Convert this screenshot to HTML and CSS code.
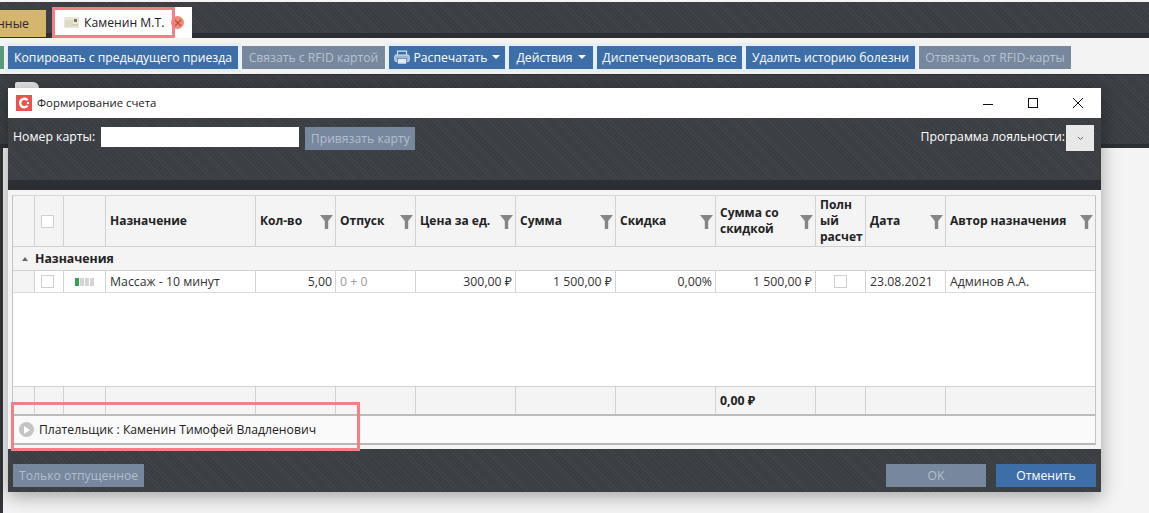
FILE: index.html
```html
<!DOCTYPE html>
<html lang="ru">
<head>
<meta charset="utf-8">
<title>Формирование счета</title>
<link rel="stylesheet" href="styles.css">
</head>
<body>
<div class="page">
  <header class="tabbar hatch">
    <div class="tab tab-gold">нные</div>
    <div class="tab tab-active">
      <svg class="tab-icon" width="15" height="11" viewBox="0 0 15 11"><rect width="15" height="11" fill="#e9e7d8"/><rect x="1" y="3" width="8" height="7" fill="#dcdac4"/><rect x="10" y="2" width="3" height="3" fill="#77745f"/><rect x="9" y="7" width="5" height="2" fill="#cfcdb6"/></svg>
      <span>Каменин М.Т.</span>
      <span class="tab-close"><svg width="8" height="8" viewBox="0 0 8 8"><path d="M1 1l6 6M7 1L1 7" stroke="#b9503e" stroke-width="1.2"/></svg></span>
    </div>
  </header>
  <nav class="toolbar">
    <span class="tbtn tbtn-green"></span>
    <button class="tbtn w-copy">Копировать с предыдущего приезда</button>
    <button class="tbtn off w-link">Связать с RFID картой</button>
    <button class="tbtn w-print">
      <svg class="print" width="16" height="15" viewBox="0 0 16 15"><path d="M3.5 5V1.2h9V5" fill="none" stroke="#d5dfea" stroke-width="1.2"/><path d="M3 11.5H2A1.2 1.2 0 0 1 .8 10.3V6.2A1.2 1.2 0 0 1 2 5h12a1.2 1.2 0 0 1 1.2 1.2v4.1a1.2 1.2 0 0 1-1.2 1.2h-1" fill="#9fb6d0" stroke="#d5dfea"/><rect x="3.5" y="8.5" width="9" height="5.5" fill="#e4eaf1" stroke="#3d6ea8" stroke-width=".6"/></svg>
      Распечатать<i class="caret"></i></button>
    <button class="tbtn w-act">Действия<i class="caret"></i></button>
    <button class="tbtn w-disp">Диспетчеризовать все</button>
    <button class="tbtn w-del">Удалить историю болезни</button>
    <button class="tbtn off w-unl">Отвязать от RFID-карты</button>
  </nav>
  <div class="band hatch"><span class="doc"></span></div>
  <main class="content"></main>
</div>

<section class="modal">
  <div class="titlebar">
    <svg class="logo" width="16" height="16" viewBox="0 0 16 16"><rect width="16" height="16" fill="#e8534f"/><path d="M11.5 5.2A4.2 4.2 0 1 0 11.5 10.8" fill="none" stroke="#fff" stroke-width="2.4"/><circle cx="12" cy="8" r="1.2" fill="#fff"/></svg>
    <span class="title">Формирование счета</span>
    <div class="winctl">
      <svg width="12" height="12" viewBox="0 0 12 12"><path d="M1 7.5h10" stroke="#111" stroke-width="1"/></svg>
      <svg width="12" height="12" viewBox="0 0 12 12"><rect x="1.5" y="1.5" width="9" height="9" fill="none" stroke="#111"/></svg>
      <svg width="12" height="12" viewBox="0 0 12 12"><path d="M1 1l10 10M11 1L1 11" stroke="#111" stroke-width="1"/></svg>
    </div>
  </div>
  <div class="cardform hatch">
    <label class="lbl">Номер карты:</label>
    <span class="cardinput"></span>
    <button class="bindbtn">Привязать карту</button>
    <span class="spacer"></span>
    <label class="lbl lbl-right">Программа лояльности:</label>
    <span class="combo"><svg width="7" height="5" viewBox="0 0 7 5"><path d="M1 1l2.5 2.5L6 1" fill="none" stroke="#666"/></svg></span>
  </div>
  <div class="strip"></div>
  <div class="panel">
    <div class="grid">
      <div class="row head">
        <div class="c"></div>
        <div class="c mid sel"><span class="chk"></span></div>
        <div class="c"></div>
        <div class="c">Назначение</div>
        <div class="c">Кол-во<svg class="fn" viewBox="0 0 13 14"><path d="M0 0h13L8.2 6v8H4.8V6z"/></svg></div>
        <div class="c">Отпуск<svg class="fn" viewBox="0 0 13 14"><path d="M0 0h13L8.2 6v8H4.8V6z"/></svg></div>
        <div class="c">Цена за ед.<svg class="fn" viewBox="0 0 13 14"><path d="M0 0h13L8.2 6v8H4.8V6z"/></svg></div>
        <div class="c">Сумма<svg class="fn" viewBox="0 0 13 14"><path d="M0 0h13L8.2 6v8H4.8V6z"/></svg></div>
        <div class="c">Скидка<svg class="fn" viewBox="0 0 13 14"><path d="M0 0h13L8.2 6v8H4.8V6z"/></svg></div>
        <div class="c">Сумма со скидкой<svg class="fn" viewBox="0 0 13 14"><path d="M0 0h13L8.2 6v8H4.8V6z"/></svg></div>
        <div class="c">Полн<br>ый<br>расчет</div>
        <div class="c">Дата<svg class="fn" viewBox="0 0 13 14"><path d="M0 0h13L8.2 6v8H4.8V6z"/></svg></div>
        <div class="c">Автор назначения<svg class="fn" viewBox="0 0 13 14"><path d="M0 0h13L8.2 6v8H4.8V6z"/></svg></div>
      </div>
      <div class="group"><i class="tri"></i>Назначения</div>
      <div class="row data">
        <div class="c c-blank"></div>
        <div class="c mid sel"><span class="chk"></span></div>
        <div class="c mid"><span class="meter"><i class="on"></i><i></i><i></i><i></i></span></div>
        <div class="c">Массаж - 10 минут</div>
        <div class="c r">5,00</div>
        <div class="c muted">0 + 0</div>
        <div class="c r">300,00 ₽</div>
        <div class="c r">1 500,00 ₽</div>
        <div class="c r">0,00%</div>
        <div class="c r">1 500,00 ₽</div>
        <div class="c mid"><span class="chk"></span></div>
        <div class="c">23.08.2021</div>
        <div class="c">Админов А.А.</div>
      </div>
      <div class="empty"></div>
      <div class="row total">
        <div class="c"></div><div class="c"></div><div class="c"></div><div class="c"></div><div class="c"></div><div class="c"></div><div class="c"></div><div class="c"></div><div class="c"></div>
        <div class="c">0,00 ₽</div>
        <div class="c"></div><div class="c"></div><div class="c"></div>
      </div>
    </div>
    <div class="payer">
      <span class="play"><svg width="6" height="8" viewBox="0 0 6 8"><path d="M0 0l6 4-6 4z" fill="#fff"/></svg></span>
      <span>Плательщик : Каменин Тимофей Владленович</span>
    </div>
  </div>
  <div class="foot hatch">
    <button class="fbtn off w-only">Только отпущенное</button>
    <span class="spacer"></span>
    <button class="fbtn off w-ok">OK</button>
    <button class="fbtn w-ok">Отменить</button>
  </div>
  <span class="mark mark-payer"></span>
</section>
<span class="mark mark-tab"></span>
</body>
</html>
```
FILE: styles.css
```css
* { box-sizing: border-box; }
html, body { margin: 0; height: 513px; overflow: hidden; }
body { font-family: "Open Sans", "Noto Sans", sans-serif; font-size: 12px; color: #222; background: #f4f4f4; }
button { font: inherit; border: 0; padding: 0 0 1px; margin: 0; }
.hatch { background-color: #3a3d42; background-image: repeating-linear-gradient(45deg, rgba(255,255,255,.035) 0 1px, transparent 1px 3px); }

.page { display: flex; flex-direction: column; height: 513px; padding-top: 2px; }
.tabbar { height: 36px; display: flex; align-items: flex-end; flex: none; border-bottom: 5px solid #2b2e32; }
.tab { display: flex; align-items: center; }
.tab-gold { width: 46px; height: 27px; margin-bottom: -4px; background: #d6b56c; justify-content: flex-end; padding-right: 17px; font-size: 12.3px; color: #2b2b2b; white-space: nowrap; }
.tab-active { width: 140px; height: 31px; margin: 0 0 -5px 6px; padding-left: 12px; background: #fff; font-size: 12.2px; color: #222; }
.tab-icon { margin-right: 5px; }
.tab-close { width: 13px; height: 13px; margin-left: 7px; border-radius: 50%; background: #ef8a78; display: flex; align-items: center; justify-content: center; }

.toolbar { height: 36px; flex: none; display: flex; align-items: flex-start; gap: 4px; padding-top: 8px; background: #f3f3f3; }
.tbtn { height: 23px; background: #3d6ea8; color: #fff; font-size: 12.2px; display: flex; align-items: center; justify-content: center; white-space: nowrap; box-shadow: 0 0 0 3px #e6eef6; }
.tbtn.off { background: #76879e; color: #b9c3d0; box-shadow: none; }
.tbtn-green { width: 4px; background: #5b9a78; box-shadow: none; }
.w-copy { width: 230px; }
.w-link { width: 143px; }
.w-print { width: 116px; }
.w-act { width: 84px; }
.w-disp { width: 145px; }
.w-del { width: 169px; }
.w-unl { width: 152px; }
.print { margin-right: 4px; }
.caret { display: inline-block; margin-left: 5px; border: 4px solid transparent; border-top-color: #fff; border-bottom: 0; }

.band { height: 74px; flex: none; border-top: 1px solid #2b2e32; border-bottom: 4px solid #2c2f33; }
.doc { display: block; width: 24px; height: 14px; margin: 7px 0 0 15px; background: #e3e5e7; border-radius: 2px 6px 0 0; }
.content { flex: 1; margin-left: 3px; background: #f4f4f4; box-shadow: -3px 0 0 #33363a; }

.modal { position: absolute; left: 8px; top: 88px; width: 1093px; height: 404px; display: flex; flex-direction: column; box-shadow: 0 4px 18px rgba(0,0,0,.35); }
.titlebar { height: 30px; flex: none; background: #fff; display: flex; align-items: center; padding: 0 0 1px 8px; }
.logo { margin: 1px 5px 0 0; }
.title { font-size: 11.4px; color: #222; }
.winctl { margin-left: auto; display: flex; gap: 33px; padding-right: 17px; }
.cardform { height: 62px; flex: none; display: flex; align-items: flex-start; padding: 9px 7px 0 5px; }
.lbl { color: #fff; font-size: 12.3px; line-height: 20px; }
.lbl-right { font-size: 12.25px; }
.cardinput { width: 198px; height: 20px; margin-left: 6px; background: #fff; }
.bindbtn { width: 110px; height: 23px; margin-left: 6px; background: #76879e; color: #b4bfcd; font-size: 12.2px; }
.spacer { flex: 1; }
.combo { width: 28px; height: 26px; margin: -2px 0 0 1px; background: #e8e8e8; display: flex; align-items: center; justify-content: center; }
.strip { height: 10px; flex: none; background: #2b2e32; }

.panel { flex: none; height: 259px; background: #f5f5f5; padding: 5px 5px 0 4px; }
.grid { height: 221px; display: flex; flex-direction: column; background: #fff; border: 1px solid #c4c4c4; border-top-color: #d6d6d6; border-bottom: 2px solid #bdbdbd; }
.row { display: grid; grid-template-columns: 22px 29px 42px 150px 80px 80px 100px 100px 100px 100px 50px 80px 149px; flex: none; }
.c { position: relative; display: flex; align-items: center; padding: 0 3px 0 4px; border-right: 1px solid #d2d2d2; overflow: hidden; }
.c:last-child { border-right: 0; }
.c.r { justify-content: flex-end; }
.c.mid { justify-content: center; padding: 0; }
.c.sel { padding-right: 3px; }
.muted { color: #9a9a9a; }
.head { height: 51px; background: #f4f4f4; border-bottom: 1px solid #d0d0d0; font-weight: 700; font-size: 12px; line-height: 16px; color: #222; }
.fn { width: 13px; height: 14px; position: absolute; right: 2px; top: 19px; fill: #858585; }
.head .c:nth-child(10) { padding-right: 22px; }
.chk { width: 13px; height: 13px; background: #fff; border: 1px solid #cfcfcf; }
.group { height: 24px; background: #f4f4f4; display: flex; align-items: center; font-weight: 700; font-size: 12.3px; color: #222; padding-left: 9px; border-bottom: 1px solid #d0d0d0; }
.tri { width: 0; height: 0; margin-right: 7px; border: 3px solid transparent; border-bottom: 4px solid #666; border-top: 0; }
.data { height: 22px; background: #fff; border-bottom: 1px solid #d8d8d8; font-size: 12.3px; color: #333; }
.c-blank { background: #f4f4f4; }
.meter { display: flex; gap: 1px; }
.meter i { width: 4px; height: 8px; background: #d4d4d4; }
.meter i.on { background: #2ea64a; }
.empty { flex: 1; background: #fff; }
.total { height: 28px; background: #f4f4f4; border-top: 1px solid #d0d0d0; font-weight: 700; font-size: 12.3px; }
.payer { height: 29px; background: #fafafa; border: 1px solid #c4c4c4; border-top: 0; border-bottom: 2px solid #b8b8b8; display: flex; align-items: center; padding-left: 6px; font-size: 12.2px; color: #222; }
.play { width: 15px; height: 15px; margin-right: 5px; border-radius: 50%; background: #c4c4c4; display: flex; align-items: center; justify-content: center; }

.foot { flex: 1; display: flex; align-items: flex-start; gap: 10px; padding: 15px 5px 0 5px; }
.fbtn { height: 23px; background: #3d6ea8; color: #fff; font-size: 12.2px; }
.fbtn.off { background: #76879e; color: #b4bfcd; }
.w-only { width: 131px; }
.w-ok { width: 100px; }

.mark { position: absolute; border: 3px solid #f47f86; pointer-events: none; }
.mark-payer { left: 3px; top: 314px; width: 349px; height: 49px; }
.mark-tab { left: 52px; top: 7px; width: 123px; height: 31px; }
```
